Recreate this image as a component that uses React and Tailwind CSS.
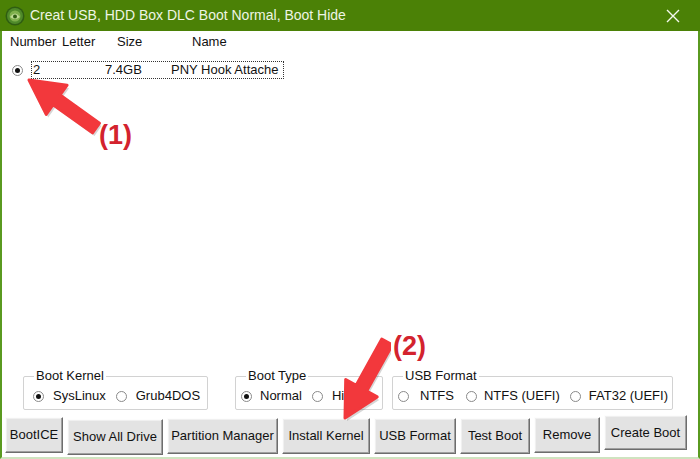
import React from 'react'

const FONT = { fontFamily: '"Liberation Sans", Arial, sans-serif' }

function Radio({ on }) {
  return (
    <span className="inline-flex h-[11px] w-[11px] shrink-0 items-center justify-center rounded-full border border-[#8a8a8a] bg-white">
      {on && <span className="h-[5px] w-[5px] rounded-full bg-[#111]" />}
    </span>
  )
}

function Arrow({ x1, y1, x2, y2, shaft = 12, headW = 36, headL = 34 }) {
  // tail (x1,y1) -> tip (x2,y2)
  const dx = x2 - x1, dy = y2 - y1
  const len = Math.hypot(dx, dy)
  const ux = dx / len, uy = dy / len
  const px = -uy, py = ux
  const bx = x2 - ux * headL, by = y2 - uy * headL
  const p = (x, y) => `${x.toFixed(1)},${y.toFixed(1)}`
  const pts = [
    p(x1 + px * shaft / 2, y1 + py * shaft / 2),
    p(bx + px * shaft / 2, by + py * shaft / 2),
    p(bx + px * headW / 2, by + py * headW / 2),
    p(x2, y2),
    p(bx - px * headW / 2, by - py * headW / 2),
    p(bx - px * shaft / 2, by - py * shaft / 2),
    p(x1 - px * shaft / 2, y1 - py * shaft / 2),
  ].join(' ')
  return (
    <g>
      <polygon points={pts} fill="#000" opacity="0.16" transform="translate(2,3)" />
      <polygon points={pts} fill="#f2383c" strokeLinejoin="round" stroke="#f2383c" strokeWidth="3" />
    </g>
  )
}

function Btn({ w, h = 'h-[36px]', mt = 'mt-0', children }) {
  return (
    <div
      className={`${w} ${h} ${mt} flex shrink-0 items-center justify-center whitespace-nowrap border border-t-[#fdfdfd] border-l-[#fdfdfd] border-r-[#6d6d6d] border-b-[#6d6d6d] bg-[#e3e3e3] text-[13px] text-[#111] shadow-[inset_-1px_-1px_0_#a0a0a0,inset_1px_1px_0_#f0f0f0]`}
    >
      {children}
    </div>
  )
}

function Group({ title, className, children }) {
  return (
    <div className={`${className} relative h-[34px] shrink-0 rounded-[2px] border border-[#d2d2d2]`}>
      <span className="absolute left-[10px] top-[-9px] bg-white px-[2px] text-[13px] leading-[16px] text-[#111]">{title}</span>
      <div className="flex h-full items-center whitespace-nowrap pt-[6px] text-[13px] leading-[16px] text-[#111]">{children}</div>
    </div>
  )
}

export default function App() {
  return (
    <div className="relative flex h-[459px] w-[700px] flex-col overflow-hidden bg-white" style={FONT}>
      {/* title bar */}
      <div className="flex h-[31px] shrink-0 items-center bg-[#4b8106] pl-[5px] pr-[20px]">
        <svg width="20" height="20" viewBox="0 0 20 20" className="shrink-0">
          <circle cx="10" cy="10" r="9.5" fill="#2f5d12" />
          <circle cx="10" cy="10" r="8" fill="#4f8a2a" />
          <circle cx="10" cy="10" r="5.5" fill="#7fb04c" />
          <path d="M5 11 Q10 4 15 11 Q10 15 5 11Z" fill="#cfe6a8" opacity="0.8" />
          <circle cx="10" cy="10.5" r="2" fill="#2f5d12" />
        </svg>
        <span className="ml-[5px] text-[14px] text-[#eef5e4]">Creat USB, HDD Box DLC Boot Normal, Boot Hide</span>
        <svg width="14" height="14" viewBox="0 0 14 14" className="ml-auto">
          <path d="M1 1 L13 13 M13 1 L1 13" stroke="#f4f8ee" strokeWidth="1.4" />
        </svg>
      </div>

      {/* body */}
      <div className="flex flex-1 flex-col border-b-2 border-l-2 border-r-2 border-[#5a9a20] border-b-[#cfe3c0]">
        <div className="flex h-[18px] items-end pl-[8px] text-[13px] leading-[15px] text-[#111]">
          <span className="w-[52px]">Number</span>
          <span className="w-[55px]">Letter</span>
          <span className="w-[75px]">Size</span>
          <span>Name</span>
        </div>
        <div className="mt-[12px] flex items-center pl-[10px]">
          <Radio on />
          <div className="ml-[8px] flex h-[18px] w-[253px] items-center border border-dotted border-[#333] pl-[1px] text-[13px] text-[#111]">
            <span className="w-[72px]">2</span>
            <span className="w-[66px]">7.4GB</span>
            <span>PNY Hook Attache</span>
          </div>
        </div>

        <div className="flex-1" />

        {/* group boxes */}
        <div className="flex items-end pl-[21px]">
          <Group title="Boot Kernel" className="w-[185px] pl-[9px]">
            <Radio on />
            <span className="ml-[9px]">SysLinux</span>
            <span className="ml-[10px] flex"><Radio /></span>
            <span className="ml-[9px]">Grub4DOS</span>
          </Group>
          <Group title="Boot Type" className="ml-[27px] w-[148px] pl-[5px]">
            <Radio on />
            <span className="ml-[8px]">Normal</span>
            <span className="ml-[10px] flex"><Radio /></span>
            <span className="ml-[9px]">Hide</span>
          </Group>
          <Group title="USB Format" className="ml-[9px] w-[281px] pl-[5px]">
            <Radio />
            <span className="ml-[11px]">NTFS</span>
            <span className="ml-[12px] flex"><Radio /></span>
            <span className="ml-[7px]">NTFS (UEFI)</span>
            <span className="ml-[10px] flex"><Radio /></span>
            <span className="ml-[8px]">FAT32 (UEFI)</span>
          </Group>
        </div>

        {/* buttons */}
        <div className="mt-[7px] flex h-[40px] items-start gap-[4px] pl-[3px]">
          <Btn w="w-[58px]" mt="mt-[0px]">BootICE</Btn>
          <Btn w="w-[96px]" mt="mt-[2px]">Show All Drive</Btn>
          <Btn w="w-[111px]" mt="mt-[1px]">Partition Manager</Btn>
          <Btn w="w-[88px]" mt="mt-[1px]">Install Kernel</Btn>
          <Btn w="w-[82px]" mt="mt-[1px]">USB Format</Btn>
          <Btn w="w-[70px]" mt="mt-[1px]">Test Boot</Btn>
          <Btn w="w-[66px]" mt="mt-[0px]">Remove</Btn>
          <Btn w="w-[83px]" h="h-[35px]" mt="mt-[-2px]">Create Boot</Btn>
        </div>
      </div>

      {/* annotations */}
      <svg className="pointer-events-none absolute left-0 top-0" width="700" height="459">
        <Arrow x1={96} y1={128} x2={29} y2={80} />
        <Arrow x1={387} y1={342} x2={345} y2={418} />
      </svg>
      <div className="absolute left-[99px] top-[119px] text-[27px] font-bold leading-[32px] text-[#d3232e]">(1)</div>
      <div className="absolute left-[391px] top-[330px] bg-white px-[2px] text-[27px] font-bold leading-[32px] text-[#d3232e]">(2)</div>
    </div>
  )
}
